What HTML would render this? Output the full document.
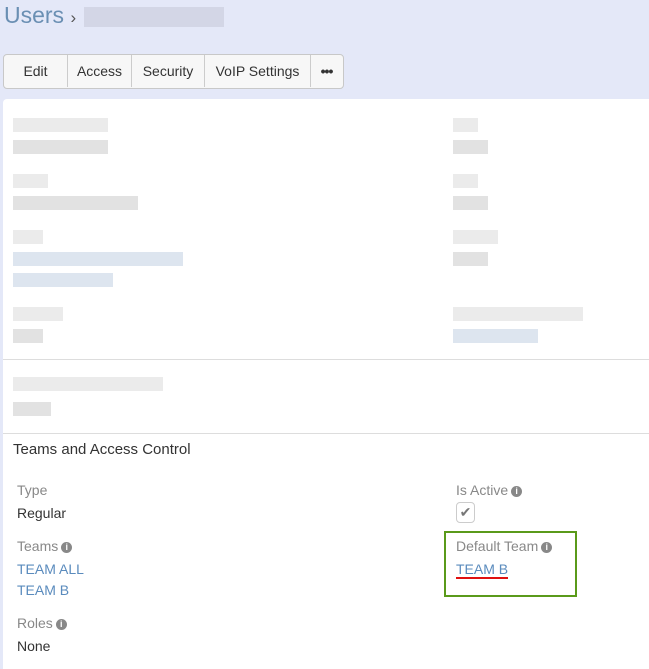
<!DOCTYPE html>
<html><head><meta charset="utf-8"><style>
body{margin:0;width:649px;height:669px;background:#e4e8f8;font-family:"Liberation Sans",sans-serif;position:relative;overflow:hidden}
.a{position:absolute}
.b{position:absolute;height:14px;background:#ebebeb}
.bl{background:#dde5ef}
.lbl{position:absolute;color:#888;font-size:14px}
.val{position:absolute;color:#333;font-size:14px}
.lnk{position:absolute;color:#5a8bbd;font-size:14px}
.i{display:inline-block;width:11px;height:11px;border-radius:50%;background:#888;color:#fff;font-size:9px;line-height:11px;text-align:center;font-weight:bold;vertical-align:1px;margin-left:3px}
.btn{float:left;height:32px;line-height:32px;font-size:14px;color:#333;text-align:center;border-right:1px solid #ccc}
</style></head><body>
<div class="a" style="left:4px;top:2px;font-size:23px;color:#6a8fb3">Users <span style="font-size:17px;color:#555">›</span></div>
<div class="a" style="left:84px;top:7px;width:140px;height:20px;background:#d3d6e6"></div>
<div class="a" style="left:3px;top:54px;width:339px;height:33px;background:#f7f7f7;border:1px solid #c8c8c8;border-radius:4px;overflow:hidden">
<div class="btn" style="width:63px">Edit</div>
<div class="btn" style="width:63px">Access</div>
<div class="btn" style="width:72px">Security</div>
<div class="btn" style="width:105px">VoIP Settings</div>
<div class="btn" style="width:31px;border:none;font-weight:bold;letter-spacing:-1px">•••</div>
</div>
<div class="a" style="left:3px;top:99px;width:646px;height:570px;background:#fff;border-radius:4px 0 0 0"></div>
<div class="b" style="left:13px;top:118px;width:95px"></div><div class="b" style="left:13px;top:140px;width:95px;background:#e2e2e2"></div>
<div class="b" style="left:13px;top:174px;width:35px"></div><div class="b" style="left:13px;top:196px;width:125px;background:#e2e2e2"></div>
<div class="b" style="left:13px;top:230px;width:30px"></div><div class="b bl" style="left:13px;top:252px;width:170px"></div><div class="b bl" style="left:13px;top:273px;width:100px"></div>
<div class="b" style="left:13px;top:307px;width:50px"></div><div class="b" style="left:13px;top:329px;width:30px;background:#e2e2e2"></div>
<div class="b" style="left:453px;top:118px;width:25px"></div><div class="b" style="left:453px;top:140px;width:35px;background:#e2e2e2"></div>
<div class="b" style="left:453px;top:174px;width:25px"></div><div class="b" style="left:453px;top:196px;width:35px;background:#e2e2e2"></div>
<div class="b" style="left:453px;top:230px;width:45px"></div><div class="b" style="left:453px;top:252px;width:35px;background:#e2e2e2"></div>
<div class="b" style="left:453px;top:307px;width:130px"></div><div class="b bl" style="left:453px;top:329px;width:85px"></div>
<div class="a" style="left:3px;top:359px;width:646px;height:1px;background:#ddd"></div>
<div class="b" style="left:13px;top:377px;width:150px"></div><div class="b" style="left:13px;top:402px;width:38px;background:#e2e2e2"></div>
<div class="a" style="left:3px;top:433px;width:646px;height:1px;background:#ddd"></div>
<div class="val" style="left:13px;top:441px;font-size:15px">Teams and Access Control</div>
<div class="lbl" style="left:17px;top:482px">Type</div>
<div class="val" style="left:17px;top:505px">Regular</div>
<div class="lbl" style="left:17px;top:538px">Teams<span class="i">i</span></div>
<div class="lnk" style="left:17px;top:561px">TEAM ALL</div>
<div class="lnk" style="left:17px;top:582px">TEAM B</div>
<div class="lbl" style="left:17px;top:615px">Roles<span class="i">i</span></div>
<div class="val" style="left:17px;top:638px">None</div>
<div class="lbl" style="left:456px;top:482px">Is Active<span class="i">i</span></div>
<div class="a" style="left:456px;top:502px;width:17px;height:19px;border:1px solid #ccc;border-radius:4px;color:#777;font-size:14px;text-align:center;line-height:19px">✔</div>
<div class="a" style="left:444px;top:531px;width:129px;height:62px;border:2px solid #5a9a1a"></div>
<div class="lbl" style="left:456px;top:538px">Default Team<span class="i">i</span></div>
<div class="lnk" style="left:456px;top:561px">TEAM B</div>
<div class="a" style="left:456px;top:577px;width:52px;height:2px;background:#e01010"></div>
</body></html>
